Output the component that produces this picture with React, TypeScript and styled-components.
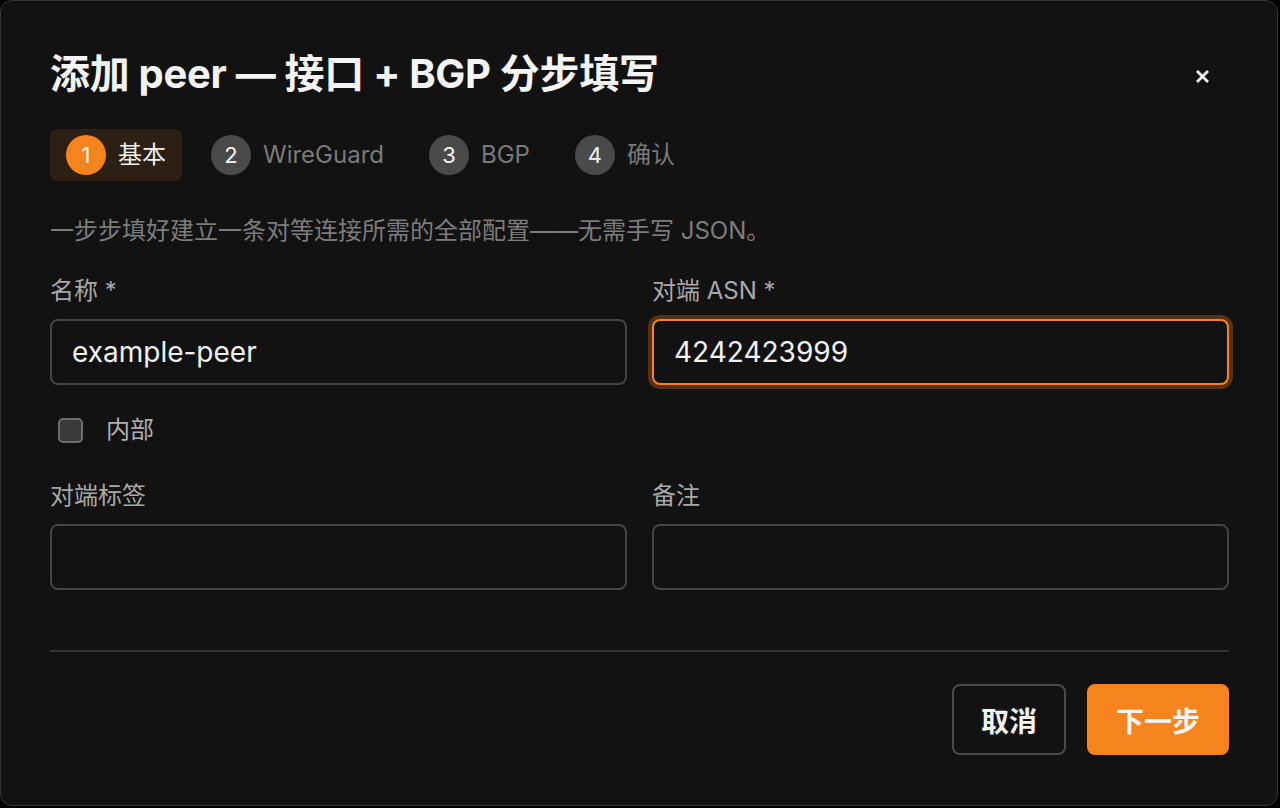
import React, { useState } from "react";
import styled, { createGlobalStyle } from "styled-components";

const FONT = `Inter, "Noto Sans CJK SC", sans-serif`;

const GlobalStyle = createGlobalStyle`
  html, body {
    margin: 0;
    padding: 0;
    background: #000;
  }
  body {
    font-family: ${FONT};
    color: #f2f2f2;
  }
  * { box-sizing: border-box; }
`;

const Dialog = styled.div`
  width: 1278px;
  height: 806px;
  background: #121212;
  border: 1px solid #363636;
  border-radius: 12px;
  padding: 50px 48px 0 49px;
  display: flex;
  flex-direction: column;
`;

const Header = styled.div`
  display: flex;
  align-items: center;
  justify-content: space-between;
`;

const Title = styled.h2`
  margin: 0;
  font-size: 40px;
  line-height: 46px;
  font-weight: 700;
  color: #f4f4f4;
  letter-spacing: -0.3px;
`;

const CloseButton = styled.button`
  width: 24px;
  height: 24px;
  margin: 4px 15px 0 0;
  padding: 0;
  border: 0;
  background: none;
  display: flex;
  align-items: center;
  justify-content: center;
  cursor: pointer;
`;

const Steps = styled.div`
  display: flex;
  gap: 13px;
  margin-top: 32px;
`;

const Step = styled.div<{ $active?: boolean }>`
  display: flex;
  align-items: center;
  gap: 12px;
  height: 52px;
  padding: 0 16px;
  border-radius: 7px;
  background: ${(p) => (p.$active ? "#2c1f13" : "transparent")};
`;

const StepNum = styled.span<{ $active?: boolean }>`
  width: 40px;
  height: 40px;
  border-radius: 50%;
  display: flex;
  align-items: center;
  justify-content: center;
  font-size: 22px;
  line-height: 1;
  color: #f4f4f4;
  background: ${(p) => (p.$active ? "#f5841f" : "#4a4a4a")};
`;

const StepLabel = styled.span<{ $active?: boolean }>`
  font-size: 24px;
  line-height: 30px;
  color: ${(p) => (p.$active ? "#f0f0f0" : "#7a7a7a")};
`;

const Description = styled.p`
  margin: 35px 0 0;
  font-size: 24px;
  line-height: 30px;
  color: #7c7c7c;
`;

const Grid = styled.div<{ $top: number }>`
  display: grid;
  grid-template-columns: 1fr 1fr;
  column-gap: 25px;
  margin-top: ${(p) => p.$top}px;
`;

const Field = styled.label`
  display: flex;
  flex-direction: column;
  gap: 12px;
`;

const Label = styled.span`
  font-size: 24px;
  line-height: 32px;
  color: #a8a8a8;
`;

const Input = styled.input<{ $focused?: boolean }>`
  height: 66px;
  width: 100%;
  padding: 0 20px;
  border-radius: 8px;
  background: #121212;
  font-family: ${FONT};
  font-size: 28px;
  color: #f2f2f2;
  outline: none;
  border: 2px solid ${(p) => (p.$focused ? "#f5841f" : "#444")};
  box-shadow: ${(p) => (p.$focused ? "0 0 0 4px #553216" : "none")};
`;

const CheckRow = styled.label`
  display: flex;
  align-items: center;
  gap: 23px;
  margin-top: 30px;
  padding-left: 8px;
  height: 30px;
  cursor: pointer;
`;

const CheckBox = styled.span<{ $checked?: boolean }>`
  width: 25px;
  height: 25px;
  border-radius: 5px;
  border: 2px solid #6e6e6e;
  background: ${(p) => (p.$checked ? "#f5841f" : "#3a3a3a")};
`;

const CheckLabel = styled.span`
  font-size: 24px;
  line-height: 30px;
  color: #b0b0b0;
`;

const Divider = styled.hr`
  margin: 60px 0 0;
  border: 0;
  border-top: 2px solid #333;
`;

const Footer = styled.div`
  display: flex;
  justify-content: flex-end;
  gap: 21px;
  margin-top: 32px;
`;

const Button = styled.button<{ $primary?: boolean }>`
  height: 71px;
  padding: 0 27px;
  border-radius: 8px;
  font-family: ${FONT};
  font-size: 28px;
  font-weight: 700;
  color: #f4f4f4;
  cursor: pointer;
  background: ${(p) => (p.$primary ? "#f5841f" : "transparent")};
  border: 2px solid ${(p) => (p.$primary ? "#f5841f" : "#4a4a4a")};
`;

const steps = ["基本", "WireGuard", "BGP", "确认"];

export default function App() {
  const [name, setName] = useState("example-peer");
  const [asn, setAsn] = useState("4242423999");
  const [internal, setInternal] = useState(false);
  const current = 0;

  return (
    <>
      <GlobalStyle />
      <Dialog lang="zh-CN">
        <Header>
          <Title>添加 peer — 接口 + BGP 分步填写</Title>
          <CloseButton aria-label="关闭">
            <svg width="13" height="13" viewBox="0 0 13 13">
              <path d="M2 2 L11 11 M11 2 L2 11" stroke="#f4f4f4" strokeWidth="2.8" strokeLinecap="square" />
            </svg>
          </CloseButton>
        </Header>

        <Steps>
          {steps.map((s, i) => (
            <Step key={s} $active={i === current}>
              <StepNum $active={i === current}>{i + 1}</StepNum>
              <StepLabel $active={i === current}>{s}</StepLabel>
            </Step>
          ))}
        </Steps>

        <Description>一步步填好建立一条对等连接所需的全部配置——无需手写 JSON。</Description>

        <Grid $top={29}>
          <Field>
            <Label>名称 *</Label>
            <Input value={name} onChange={(e) => setName(e.target.value)} />
          </Field>
          <Field>
            <Label>对端 ASN *</Label>
            <Input $focused value={asn} onChange={(e) => setAsn(e.target.value)} />
          </Field>
        </Grid>

        <CheckRow onClick={() => setInternal(!internal)}>
          <CheckBox $checked={internal} />
          <CheckLabel>内部</CheckLabel>
        </CheckRow>

        <Grid $top={35}>
          <Field>
            <Label>对端标签</Label>
            <Input />
          </Field>
          <Field>
            <Label>备注</Label>
            <Input />
          </Field>
        </Grid>

        <Divider />

        <Footer>
          <Button>取消</Button>
          <Button $primary>下一步</Button>
        </Footer>
      </Dialog>
    </>
  );
}
